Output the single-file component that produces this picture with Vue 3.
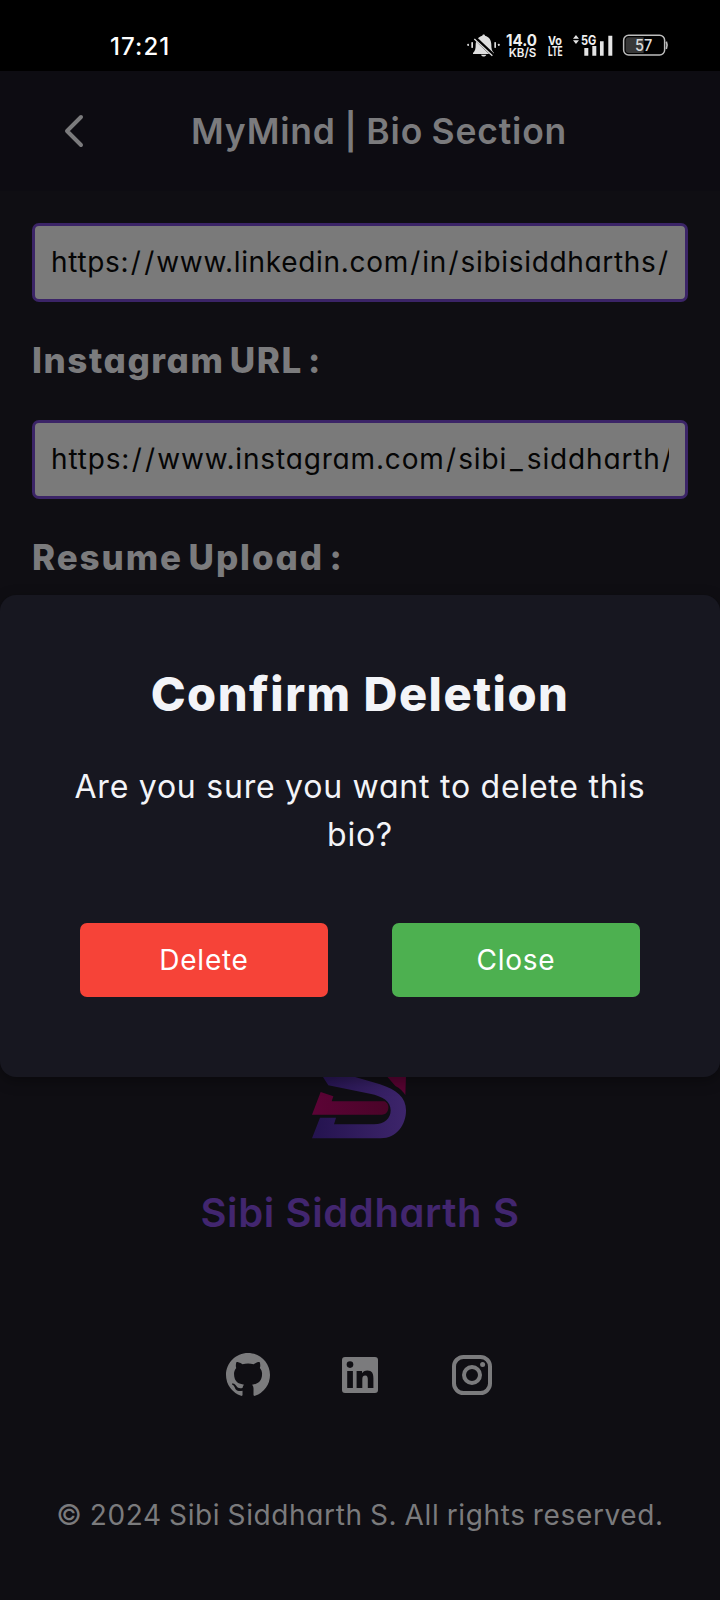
<script setup>
const fields = [
  { value: 'https://www.linkedin.com/in/sibisiddharths/', label: 'Instagram URL :', cls: 'first' },
  { value: 'https://www.instagram.com/sibi_siddharth/', label: 'Resume Upload :', cls: 'second' },
]
// Slashes and underscores get wider tracking than the letters around them.
const parts = (url) => url.split(/([/_])/).filter(Boolean)
const kind = (part) => (part === '/' ? 'slash' : part === '_' ? 'under' : '')
</script>

<template>
  <div class="screen">
    <div class="status">
      <span class="clock">17:21</span>
      <svg class="status-icons" viewBox="80 40 610 75" width="203.3" height="25">
        <g fill="#dedede">
          <path d="M98 100c7-7 8-14 8-25 0-14 8-24 20-27 0-5 8-5 8 0 12 3 19 13 19 27 0 11 1 18 8 25v3H98zM122 105h16c-2 7-14 7-16 0z" />
          <rect x="93" y="67" width="5" height="18" rx="2" /><rect x="162" y="67" width="5" height="18" rx="2" />
          <rect x="81" y="72" width="5" height="7" rx="2" /><rect x="173" y="72" width="5" height="7" rx="2" />
        </g>
        <path d="M103 54l56 53" stroke="#000" stroke-width="11" />
        <path d="M102 58l54 50" stroke="#dedede" stroke-width="4" />
        <g fill="#f0f0f0" font-family="Inter, sans-serif" font-weight="700">
          <text x="197" y="79" font-size="48" textLength="93" lengthAdjust="spacingAndGlyphs">14.0</text>
          <text x="205" y="113" font-size="37" font-weight="600" textLength="83" lengthAdjust="spacingAndGlyphs">KB/S</text>
          <text x="323" y="75" font-size="36" textLength="42" lengthAdjust="spacingAndGlyphs">Vo</text>
          <text x="323" y="108" font-size="38" textLength="44" lengthAdjust="spacingAndGlyphs">LTE</text>
          <text x="422" y="75" font-size="40" textLength="46" lengthAdjust="spacingAndGlyphs">5G</text>
        </g>
        <g fill="#e4e4e4">
          <path d="M398 57l9-11 9 11zM398 62l9 11 9-11z" />
          <path d="M432 85h12v23h-12zM456 79h12v29h-12zM479 65h11v43h-11zM504 48h12v60h-12z" />
        </g>
        <rect x="550" y="47" width="123" height="59" rx="15" fill="#000" stroke="#bdbdbd" stroke-width="4.5" />
        <path d="M566 53h44v47h-44q-10 0-10-10v-27q0-10 10-10z" fill="#383838" />
        <path d="M678 66q5 11 0 22" fill="none" stroke="#bdbdbd" stroke-width="5" />
        <text x="584" y="94" font-family="Inter, sans-serif" font-size="46" font-weight="500" fill="#dcdcdc" textLength="52" lengthAdjust="spacingAndGlyphs">57</text>
      </svg>
    </div>

    <header class="header">
      <svg class="back" viewBox="0 0 20 34" width="20" height="34"><path d="M17 3L3 17l14 14" /></svg>
      <h1>MyMind | Bio Section</h1>
    </header>

    <main class="form">
      <div v-for="f in fields" :key="f.label" class="group" :class="f.cls">
        <div class="input"><div class="clip"><span v-for="(part, i) in parts(f.value)" :key="i" :class="kind(part)">{{ part }}</span></div></div>
        <h2>{{ f.label }}</h2>
      </div>
    </main>

    <footer class="footer">
      <svg class="logo" viewBox="66 50 282 188" width="94" height="62.7">
        <defs>
          <linearGradient id="violet" x1="0" x2="1"><stop offset="0" stop-color="#24134f" /><stop offset="1" stop-color="#3d256b" /></linearGradient>
          <linearGradient id="rose" x1="0" x2="1"><stop offset="0" stop-color="#5c0336" /><stop offset="1" stop-color="#4a0428" /></linearGradient>
        </defs>
        <path fill="url(#violet)" d="M97 50h88l85 25c50 16 78 40 78 78 0 44-28 84-76 84H66l24-62h48l-6 20h120c32 0 50-18 50-42 0-28-24-42-62-50L115 78z" />
        <path fill="url(#rose)" d="M92 98l38 13-5 15h158c10 4 15 15 11 26-3 9-9 14-18 14H66z" />
        <path fill="#570331" d="M290 50h58l-2 58q-10-18-30-28z" />
      </svg>
      <h3>Sibi Siddharth S</h3>
      <div class="social">
        <svg class="github" viewBox="2 2 20 20" width="44" height="44"><path d="M12 2C6.475 2 2 6.475 2 12a9.994 9.994 0 0 0 6.838 9.488c.5.087.687-.213.687-.476 0-.237-.013-1.024-.013-1.862-2.512.463-3.162-.612-3.362-1.175-.113-.288-.6-1.175-1.025-1.413-.35-.187-.85-.65-.013-.662.788-.013 1.35.725 1.538 1.025.9 1.512 2.338 1.087 2.912.825.088-.65.35-1.087.638-1.337-2.225-.25-4.55-1.113-4.55-4.938 0-1.088.387-1.987 1.025-2.688-.1-.25-.45-1.275.1-2.65 0 0 .837-.262 2.75 1.026a9.28 9.28 0 0 1 2.5-.338c.85 0 1.7.112 2.5.337 1.912-1.3 2.75-1.024 2.75-1.024.55 1.375.2 2.4.1 2.65.637.7 1.025 1.587 1.025 2.687 0 3.838-2.337 4.688-4.562 4.938.362.312.675.912.675 1.85 0 1.337-.013 2.412-.013 2.75 0 .262.188.574.688.474A10.016 10.016 0 0 0 22 12c0-5.525-4.475-10-10-10z" /></svg>
        <svg class="linkedin" viewBox="0 0 36 36" width="36" height="36">
          <rect width="36" height="36" rx="3" />
          <g class="cut"><circle cx="8" cy="7.6" r="3.3" /><path d="M5.2 13.9h5.7V31H5.2zM14.6 13.9H20v2.4c.9-1.6 2.8-2.8 5.4-2.8 4.6 0 6 3 6 7.7V31h-5.6v-8.6c0-2.3-.4-4-2.6-4s-2.9 1.6-2.9 4V31h-5.7z" /></g>
        </svg>
        <svg class="instagram" viewBox="0 0 40 40" width="40" height="40">
          <rect x="2" y="2" width="36" height="36" rx="9.5" /><circle cx="20" cy="20" r="8" /><circle class="dot" cx="30.6" cy="9.4" r="2.5" />
        </svg>
      </div>
      <p class="copyright">© 2024 Sibi Siddharth S. All rights reserved.</p>
    </footer>

    <section class="modal">
      <h4>Confirm Deletion</h4>
      <p>Are you sure you want to delete this<br />bio?</p>
      <div class="actions">
        <button class="delete">Delete</button>
        <button class="close">Close</button>
      </div>
    </section>
  </div>
</template>

<style>
body { background: #0f0e13; }
</style>

<style scoped>
.screen { position: relative; width: 720px; height: 1600px; overflow: hidden; display: flex; flex-direction: column; background: #0f0e13; color: #7b7b7d; font-family: Inter, "Liberation Sans", sans-serif; font-feature-settings: "cv11"; white-space: nowrap; }
h1, h2, h3, h4, p { margin: 0; }
.status { flex: none; height: 71px; box-sizing: border-box; padding: 33px 50px 0 110px; display: flex; justify-content: space-between; align-items: flex-start; background: #000; }
.status-icons { overflow: visible; }
.clock { color: #fff; font-size: 24px; line-height: 27px; font-weight: 500; letter-spacing: 1.1px; }
.header { flex: none; height: 120px; display: flex; align-items: center; background: #0d0c12; }
.back { margin-left: 64px; fill: none; stroke: #7b7b7d; stroke-width: 4; stroke-linecap: round; stroke-linejoin: round; }
h1 { margin: 2px 0 0 107px; font-size: 35.5px; font-weight: 600; line-height: 44px; letter-spacing: .8px; word-spacing: -1.2px; }
.form { flex: none; height: 885px; padding: 32px 32px 0; box-sizing: border-box; }
.group { height: 197px; }
.input { height: 79px; box-sizing: border-box; border: 3px solid #3b2467; border-radius: 7px; background: #7a7a7a; padding: 0 16px; }
.clip { overflow: hidden; height: 73px; line-height: 72px; color: #050505; font-size: 28px; letter-spacing: .68px; }
.second .clip { letter-spacing: .84px; }
.clip .slash { margin-left: 1.4px; letter-spacing: 2px; }
.clip .under { letter-spacing: 4px; margin-left: 3px; }
h2 { margin-top: 35px; line-height: 47px; font-size: 35px; font-weight: 800; letter-spacing: 1.55px; word-spacing: -4px; }
.second h2 { letter-spacing: 1.9px; }
.footer { flex: 1; display: flex; flex-direction: column; align-items: center; }
.logo { flex: none; margin-left: -3px; }
h3 { margin-top: 50px; line-height: 48px; font-size: 40px; font-weight: 600; color: #42266f; letter-spacing: .62px; }
.social { margin: 116px 2px 0 0; height: 44px; display: flex; align-items: center; fill: #7b7b7d; }
.linkedin { margin: 0 74px 0 72px; }
.linkedin .cut { fill: #0f0e13; }
.instagram { fill: none; stroke: #7b7b7d; stroke-width: 4; }
.instagram .dot { fill: #7b7b7d; stroke: none; }
.copyright { margin-top: 98px; line-height: 40px; font-size: 28px; letter-spacing: .63px; word-spacing: -1.2px; }
.modal { position: absolute; left: 0; top: 595px; width: 720px; height: 482px; box-sizing: border-box; padding: 69px 80px 0; border-radius: 16px; background: #171720; box-shadow: 0 4px 14px rgba(0, 0, 0, .35); text-align: center; color: #f3f4f8; }
.modal h4 { font-size: 47px; font-weight: 800; line-height: 60px; letter-spacing: 1.5px; }
.modal p { margin: 39px -20px 0; font-size: 32px; line-height: 48px; letter-spacing: .76px; }
.actions { display: flex; justify-content: space-between; margin-top: 64px; }
button { width: 248px; height: 74px; border: 0; border-radius: 7px; padding: 0; color: #fff; font: 28px/73px Inter, sans-serif; font-feature-settings: "cv11"; letter-spacing: .75px; }
.delete { background: #f64338; }
.close { background: #4db050; }
</style>
